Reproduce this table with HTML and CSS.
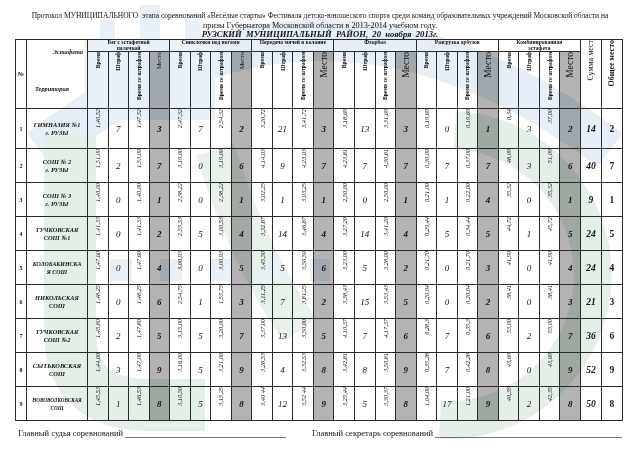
FILE: index.html
```html
<!DOCTYPE html>
<html lang="ru">
<head>
<meta charset="utf-8">
<title>Протокол</title>
<link rel="stylesheet" href="styles.css">
</head>
<body>
<div class="page">
  <div class="content">
    <div class="title l1">Протокол МУНИЦИПАЛЬНОГО&nbsp; этапа соревнований «Весёлые старты» Фестиваля детско-юношеского спорта среди команд образовательных учреждений Московской области на</div>
    <div class="title l2">призы Губернатора Московской области в 2013-2014 учебном году.</div>
    <div class="title l3">РУЗСКИЙ&nbsp; МУНИЦИПАЛЬНЫЙ&nbsp; РАЙОН,&nbsp; 20&nbsp; ноября&nbsp; 2013г.</div>
    <table class="grid">
      <colgroup>
        <col class="c-no"><col class="c-name">
        <col class="c-s"><col class="c-s"><col class="c-s"><col class="c-s">
        <col class="c-s"><col class="c-s"><col class="c-s"><col class="c-s">
        <col class="c-s"><col class="c-s"><col class="c-s"><col class="c-s">
        <col class="c-s"><col class="c-s"><col class="c-s"><col class="c-s">
        <col class="c-s"><col class="c-s"><col class="c-s"><col class="c-s">
        <col class="c-s"><col class="c-s"><col class="c-s"><col class="c-s">
        <col class="c-end"><col class="c-end">
      </colgroup>
      <tr class="h1">
        <th class="hno" rowspan="2">№</th>
        <th class="hname" rowspan="2"><div class="hname-in"><span class="est">Эстафета</span><span class="terr">Территория</span></div></th>
        <th class="grp" colspan="4">Бег с эстафетной<br>палочкой</th>
        <th class="grp" colspan="4">Сниклочки под ногами</th>
        <th class="grp" colspan="4">Передача мячей в колонне</th>
        <th class="grp" colspan="4">Флорбол</th>
        <th class="grp" colspan="4">Разгрузка арбузов</th>
        <th class="grp" colspan="4">Комбинированная<br>эстафета</th>
        <th class="hend" rowspan="2"><span class="v vsum">Сумма мест</span></th>
        <th class="hend" rowspan="2"><span class="v vtot">Общее место</span></th>
      </tr>
      <tr class="h2">
        <th class="hv"><span class="v">Время</span></th><th class="hv"><span class="v">Штраф</span></th><th class="hv"><span class="v">Время со штрафом</span></th><th class="hv gray"><span class="v vm1">Место</span></th>
        <th class="hv"><span class="v">Время</span></th><th class="hv"><span class="v">Штраф</span></th><th class="hv"><span class="v">Время со штрафом</span></th><th class="hv gray"><span class="v vm1">Место</span></th>
        <th class="hv"><span class="v">Время</span></th><th class="hv"><span class="v">Штраф</span></th><th class="hv"><span class="v">Время со штрафом</span></th><th class="hv gray"><span class="v vm2">Место</span></th>
        <th class="hv"><span class="v">Время</span></th><th class="hv"><span class="v">Штраф</span></th><th class="hv"><span class="v">Время со штрафом</span></th><th class="hv gray"><span class="v vm2">Место</span></th>
        <th class="hv"><span class="v">Время</span></th><th class="hv"><span class="v">Штраф</span></th><th class="hv"><span class="v">Время со штрафом</span></th><th class="hv gray"><span class="v vm2">Место</span></th>
        <th class="hv"><span class="v">Время</span></th><th class="hv"><span class="v">Штраф</span></th><th class="hv"><span class="v">Время со штрафом</span></th><th class="hv gray"><span class="v vm2">Место</span></th>
      </tr>
      <tr class="r first">
        <td class="n">1</td><td class="nm">ГИМНАЗИЯ №1<br>г. РУЗЫ</td>
        <td class="t"><span class="v">1,40,52</span></td><td class="p">7</td><td class="t"><span class="v">1,47,52</span></td><td class="m">3</td>
        <td class="t"><span class="v">2,47,32</span></td><td class="p">7</td><td class="t"><span class="v">2,54,32</span></td><td class="m">2</td>
        <td class="t"><span class="v">3,20,72</span></td><td class="p">21</td><td class="t"><span class="v">3,41,72</span></td><td class="m">3</td>
        <td class="t"><span class="v">3,18,69</span></td><td class="p">13</td><td class="t"><span class="v">3,31,69</span></td><td class="m">3</td>
        <td class="t"><span class="v">0,19,69</span></td><td class="p">0</td><td class="t"><span class="v">0,19,69</span></td><td class="m">1</td>
        <td class="t"><span class="v">0,34</span></td><td class="p">3</td><td class="t"><span class="v">37,00</span></td><td class="m">2</td>
        <td class="s">14</td><td class="o">2</td>
      </tr>
      <tr class="r">
        <td class="n">2</td><td class="nm">СОШ № 2<br>г. РУЗЫ</td>
        <td class="t"><span class="v">1,51,00</span></td><td class="p">2</td><td class="t"><span class="v">1,53,00</span></td><td class="m">7</td>
        <td class="t"><span class="v">3,19,00</span></td><td class="p">0</td><td class="t"><span class="v">3,19,00</span></td><td class="m">6</td>
        <td class="t"><span class="v">4,14,03</span></td><td class="p">9</td><td class="t"><span class="v">4,23,03</span></td><td class="m">7</td>
        <td class="t"><span class="v">4,23,81</span></td><td class="p">7</td><td class="t"><span class="v">4,30,81</span></td><td class="m">7</td>
        <td class="t"><span class="v">0,30,00</span></td><td class="p">7</td><td class="t"><span class="v">0,37,00</span></td><td class="m">7</td>
        <td class="t"><span class="v">48,09</span></td><td class="p">3</td><td class="t"><span class="v">51,09</span></td><td class="m">6</td>
        <td class="s">40</td><td class="o">7</td>
      </tr>
      <tr class="r">
        <td class="n">3</td><td class="nm">СОШ № 3<br>г. РУЗЫ</td>
        <td class="t"><span class="v">1,40,00</span></td><td class="p">0</td><td class="t"><span class="v">1,40,00</span></td><td class="m">1</td>
        <td class="t"><span class="v">2,38,22</span></td><td class="p">0</td><td class="t"><span class="v">2,38,22</span></td><td class="m">1</td>
        <td class="t"><span class="v">3,02,25</span></td><td class="p">1</td><td class="t"><span class="v">3,03,25</span></td><td class="m">1</td>
        <td class="t"><span class="v">2,50,00</span></td><td class="p">0</td><td class="t"><span class="v">2,50,00</span></td><td class="m">1</td>
        <td class="t"><span class="v">0,21,00</span></td><td class="p">1</td><td class="t"><span class="v">0,22,00</span></td><td class="m">4</td>
        <td class="t"><span class="v">35,32</span></td><td class="p">0</td><td class="t"><span class="v">35,32</span></td><td class="m">1</td>
        <td class="s">9</td><td class="o">1</td>
      </tr>
      <tr class="r">
        <td class="n">4</td><td class="nm">ТУЧКОВСКАЯ<br>СОШ №1</td>
        <td class="t"><span class="v">1,41,33</span></td><td class="p">0</td><td class="t"><span class="v">1,41,33</span></td><td class="m">2</td>
        <td class="t"><span class="v">2,55,53</span></td><td class="p">5</td><td class="t"><span class="v">3,00,53</span></td><td class="m">4</td>
        <td class="t"><span class="v">3,32,87</span></td><td class="p">14</td><td class="t"><span class="v">3,46,87</span></td><td class="m">4</td>
        <td class="t"><span class="v">3,27,20</span></td><td class="p">14</td><td class="t"><span class="v">3,41,20</span></td><td class="m">4</td>
        <td class="t"><span class="v">0,29,44</span></td><td class="p">5</td><td class="t"><span class="v">0,34,44</span></td><td class="m">5</td>
        <td class="t"><span class="v">44,72</span></td><td class="p">1</td><td class="t"><span class="v">45,72</span></td><td class="m">5</td>
        <td class="s">24</td><td class="o">5</td>
      </tr>
      <tr class="r">
        <td class="n">5</td><td class="nm nm-long">КОЛОБАКИНСКА<br>Я СОШ</td>
        <td class="t"><span class="v">1,47,60</span></td><td class="p">0</td><td class="t"><span class="v">1,47,60</span></td><td class="m">4</td>
        <td class="t"><span class="v">3,00,93</span></td><td class="p">0</td><td class="t"><span class="v">3,00,93</span></td><td class="m">5</td>
        <td class="t"><span class="v">3,45,50</span></td><td class="p">5</td><td class="t"><span class="v">3,50,50</span></td><td class="m">6</td>
        <td class="t"><span class="v">3,23,00</span></td><td class="p">5</td><td class="t"><span class="v">3,28,00</span></td><td class="m">2</td>
        <td class="t"><span class="v">0,21,70</span></td><td class="p">0</td><td class="t"><span class="v">0,21,70</span></td><td class="m">3</td>
        <td class="t"><span class="v">41,90</span></td><td class="p">0</td><td class="t"><span class="v">41,90</span></td><td class="m">4</td>
        <td class="s">24</td><td class="o">4</td>
      </tr>
      <tr class="r">
        <td class="n">6</td><td class="nm">НИКОЛЬСКАЯ<br>СОШ</td>
        <td class="t"><span class="v">1,48,25</span></td><td class="p">0</td><td class="t"><span class="v">1,48,25</span></td><td class="m">6</td>
        <td class="t"><span class="v">2,54,75</span></td><td class="p">1</td><td class="t"><span class="v">1,55,75</span></td><td class="m">3</td>
        <td class="t"><span class="v">3,11,25</span></td><td class="p">7</td><td class="t"><span class="v">3,81,25</span></td><td class="m">2</td>
        <td class="t"><span class="v">3,38,43</span></td><td class="p">15</td><td class="t"><span class="v">3,53,43</span></td><td class="m">5</td>
        <td class="t"><span class="v">0,20,94</span></td><td class="p">0</td><td class="t"><span class="v">0,20,94</span></td><td class="m">2</td>
        <td class="t"><span class="v">38,41</span></td><td class="p">0</td><td class="t"><span class="v">38,41</span></td><td class="m">3</td>
        <td class="s">21</td><td class="o">3</td>
      </tr>
      <tr class="r">
        <td class="n">7</td><td class="nm">ТУЧКОВСКАЯ<br>СОШ №2</td>
        <td class="t"><span class="v">1,45,80</span></td><td class="p">2</td><td class="t"><span class="v">1,47,80</span></td><td class="m">5</td>
        <td class="t"><span class="v">3,15,00</span></td><td class="p">5</td><td class="t"><span class="v">3,20,00</span></td><td class="m">7</td>
        <td class="t"><span class="v">3,37,00</span></td><td class="p">13</td><td class="t"><span class="v">3,50,00</span></td><td class="m">5</td>
        <td class="t"><span class="v">4,10,37</span></td><td class="p">7</td><td class="t"><span class="v">4,17,37</span></td><td class="m">6</td>
        <td class="t"><span class="v">0,28,3</span></td><td class="p">7</td><td class="t"><span class="v">0,35,3</span></td><td class="m">6</td>
        <td class="t"><span class="v">53,00</span></td><td class="p">2</td><td class="t"><span class="v">55,00</span></td><td class="m">7</td>
        <td class="s">36</td><td class="o">6</td>
      </tr>
      <tr class="r">
        <td class="n">8</td><td class="nm">СЫТЬКОВСКАЯ<br>СОШ</td>
        <td class="t"><span class="v">1,44,00</span></td><td class="p">3</td><td class="t"><span class="v">1,47,00</span></td><td class="m">9</td>
        <td class="t"><span class="v">3,16,00</span></td><td class="p">5</td><td class="t"><span class="v">3,21,00</span></td><td class="m">9</td>
        <td class="t"><span class="v">3,28,53</span></td><td class="p">4</td><td class="t"><span class="v">3,32,53</span></td><td class="m">8</td>
        <td class="t"><span class="v">3,42,81</span></td><td class="p">8</td><td class="t"><span class="v">3,50,81</span></td><td class="m">9</td>
        <td class="t"><span class="v">0,35,28</span></td><td class="p">7</td><td class="t"><span class="v">0,42,28</span></td><td class="m">8</td>
        <td class="t"><span class="v">43,69</span></td><td class="p">0</td><td class="t"><span class="v">43,69</span></td><td class="m">9</td>
        <td class="s">52</td><td class="o">9</td>
      </tr>
      <tr class="r">
        <td class="n">9</td><td class="nm nm-small">НОВОВОЛКОВСКАЯ<br>СОШ</td>
        <td class="t"><span class="v">1,45,53</span></td><td class="p">1</td><td class="t"><span class="v">1,46,53</span></td><td class="m">8</td>
        <td class="t"><span class="v">3,10,50</span></td><td class="p">5</td><td class="t"><span class="v">3,15,25</span></td><td class="m">8</td>
        <td class="t"><span class="v">3,40 44</span></td><td class="p">12</td><td class="t"><span class="v">3,52 44</span></td><td class="m">9</td>
        <td class="t"><span class="v">3,25,44</span></td><td class="p">5</td><td class="t"><span class="v">3,30,37</span></td><td class="m">8</td>
        <td class="t"><span class="v">1,04,00</span></td><td class="p">17</td><td class="t"><span class="v">1,21,00</span></td><td class="m">9</td>
        <td class="t"><span class="v">40,35</span></td><td class="p">2</td><td class="t"><span class="v">42,35</span></td><td class="m">8</td>
        <td class="s">50</td><td class="o">8</td>
      </tr>
    </table>
    <div class="footer">
      <div class="sig sig1"><span>Главный судья соревнований</span><span class="line"></span></div>
      <div class="sig sig2"><span>Главный секретарь соревнований</span><span class="line"></span></div>
    </div>
  </div>
  <svg class="wm" viewBox="0 0 640 452" aria-hidden="true">
    <path d="M40 150 Q 320 -70 610 150" fill="none" stroke="#e6eff7" stroke-width="42"/>
    <path d="M85 120 L85 40 L100 40 L100 20 L115 20 L115 40 L140 40 L140 5 L160 5 L160 40 L185 40 L185 20 L200 20 L200 40 L215 40 L215 120 Z" fill="#e8f0f8"/>
    <path d="M70 135 L70 330 Q70 405 150 405 L205 405" fill="none" stroke="#e4efe7" stroke-width="52"/>
    <path d="M215 150 Q 250 260 300 330" fill="none" stroke="#e8f1ea" stroke-width="40"/>
    <path d="M455 130 A 95 95 0 1 1 440 420" fill="none" stroke="#e4efe7" stroke-width="38"/>
    <path d="M110 270 L330 270" fill="none" stroke="#e9f1f8" stroke-width="22" stroke-dasharray="22 28"/>
  </svg>
</div>
</body>
</html>
```
FILE: styles.css
```css
html, body {
  margin: 0;
  padding: 0;
  background: #ffffff;
}

body {
  font-family: "Liberation Serif", "Times New Roman", serif;
  color: #141414;
}

.page {
  display: grid;
  width: 640px;
  height: 452px;
  overflow: hidden;
}

.page > * {
  grid-area: 1 / 1;
}

.content {
  padding-top: 11px;
}

.wm {
  width: 640px;
  height: 452px;
  mix-blend-mode: multiply;
  pointer-events: none;
}

.title {
  text-align: center;
  white-space: nowrap;
}

.l1 {
  font-size: 7.5px;
  line-height: 10px;
}

.l2 {
  font-size: 8.2px;
  line-height: 9px;
}

.l3 {
  font-size: 8.6px;
  line-height: 9px;
  font-weight: bold;
  font-style: italic;
}

.grid {
  border-collapse: collapse;
  table-layout: fixed;
  width: 607px;
  margin-left: 15px;
}

.c-no { width: 11px; }
.c-name { width: 61px; }
.c-s { width: 20.54px; }
.c-end { width: 21px; }

.grid th,
.grid td {
  border: 1px solid #2b2b2b;
  padding: 0;
  overflow: hidden;
  text-align: center;
}

.v {
  display: inline-block;
  writing-mode: vertical-rl;
  transform: rotate(180deg);
  white-space: nowrap;
}

.h1 { height: 12px; }
.h2 { height: 57px; }

.grp {
  font-size: 5.5px;
  line-height: 5.6px;
  font-weight: bold;
  vertical-align: top;
  padding-top: 0.5px;
}

.hno {
  font-size: 6px;
  font-weight: bold;
  vertical-align: middle;
  padding-bottom: 16px;
}

.hname {
  vertical-align: top;
}

.hname-in {
  display: flex;
  flex-direction: column;
  justify-content: space-between;
  height: 68px;
  padding: 8px 4px 16px 8px;
  box-sizing: border-box;
  font-size: 6.3px;
  font-weight: bold;
  font-style: italic;
}

.est {
  align-self: flex-end;
}

.terr {
  align-self: flex-start;
}

.hv {
  vertical-align: top;
  padding-top: 2px;
  font-size: 5.6px;
  font-weight: bold;
  line-height: 6px;
}

.gray {
  background: #b3b3b3;
}

.vm1 {
  font-weight: normal;
  font-size: 6.4px;
}

.vm2 {
  font-weight: normal;
  font-size: 9.5px;
  line-height: 10px;
}

.hend {
  vertical-align: top;
  padding-top: 1px;
  font-size: 8px;
  line-height: 9px;
  font-weight: normal;
}

.vtot {
  font-weight: bold;
}

.r { height: 34px; }
.r.first { height: 40px; }

.n {
  font-size: 6px;
  font-weight: bold;
  vertical-align: middle;
  padding-bottom: 6px;
}

.nm {
  font-size: 6.4px;
  line-height: 8px;
  font-weight: bold;
  font-style: italic;
  vertical-align: middle;
  padding-bottom: 6px;
  white-space: nowrap;
}

.nm-long {
  font-size: 5.9px;
}

.nm-small {
  font-size: 5.2px;
}

.t {
  vertical-align: top;
  padding-top: 2px;
  font-size: 6.3px;
  font-style: italic;
  line-height: 7px;
}

.p {
  font-size: 9px;
  font-style: italic;
  vertical-align: middle;
  padding-bottom: 4px;
}

.m {
  background: #b3b3b3;
  font-size: 9px;
  font-weight: bold;
  font-style: italic;
  vertical-align: middle;
  padding-bottom: 4px;
}

.s {
  font-size: 9.5px;
  font-weight: bold;
  font-style: italic;
  vertical-align: middle;
  padding-bottom: 4px;
}

.o {
  font-size: 9.5px;
  font-weight: bold;
  vertical-align: middle;
  padding-bottom: 4px;
}

.footer {
  display: flex;
  margin-top: 7px;
  padding-left: 18px;
  font-size: 8.5px;
  line-height: 10px;
}

.sig {
  display: flex;
  align-items: flex-end;
}

.sig1 {
  width: 268px;
}

.sig2 {
  width: 310px;
  margin-left: 26px;
}

.line {
  flex: 1;
  border-bottom: 1px solid #777;
  height: 7px;
  margin-left: 2px;
}
```
